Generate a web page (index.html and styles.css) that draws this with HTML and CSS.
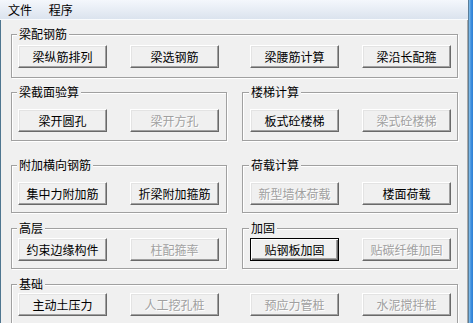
FILE: index.html
```html
<!DOCTYPE html>
<html lang="zh-CN">
<head>
    <meta charset="UTF-8">
    <meta name="viewport" content="width=device-width, initial-scale=1.0">
    <title>结构计算工具</title>
    <link rel="stylesheet" href="styles.css">
</head>
<body>

<div class="window">
    <div class="client">
        <div class="menubar">
            <span class="menu-item">文件</span>
            <span class="menu-item">程序</span>
        </div>

        <div class="content">
            <div class="group wide g1">
                <div class="group-title">梁配钢筋</div>
                <div class="buttons">
                    <button class="btn">梁纵筋排列</button>
                    <button class="btn">梁选钢筋</button>
                    <button class="btn">梁腰筋计算</button>
                    <button class="btn">梁沿长配箍</button>
                </div>
            </div>

            <div class="row r2">
                <div class="group half">
                    <div class="group-title">梁截面验算</div>
                    <div class="buttons">
                        <button class="btn">梁开圆孔</button>
                        <button class="btn" disabled>梁开方孔</button>
                    </div>
                </div>
                <div class="group half right">
                    <div class="group-title">楼梯计算</div>
                    <div class="buttons">
                        <button class="btn">板式砼楼梯</button>
                        <button class="btn" disabled>梁式砼楼梯</button>
                    </div>
                </div>
            </div>

            <div class="row r3">
                <div class="group half">
                    <div class="group-title">附加横向钢筋</div>
                    <div class="buttons">
                        <button class="btn">集中力附加筋</button>
                        <button class="btn">折梁附加箍筋</button>
                    </div>
                </div>
                <div class="group half right">
                    <div class="group-title">荷载计算</div>
                    <div class="buttons">
                        <button class="btn" disabled>新型墙体荷载</button>
                        <button class="btn">楼面荷载</button>
                    </div>
                </div>
            </div>

            <div class="row r4">
                <div class="group half">
                    <div class="group-title">高层</div>
                    <div class="buttons">
                        <button class="btn">约束边缘构件</button>
                        <button class="btn" disabled>柱配箍率</button>
                    </div>
                </div>
                <div class="group half right">
                    <div class="group-title">加固</div>
                    <div class="buttons">
                        <button class="btn default">贴钢板加固</button>
                        <button class="btn" disabled>贴碳纤维加固</button>
                    </div>
                </div>
            </div>

            <div class="group wide g5">
                <div class="group-title">基础</div>
                <div class="buttons">
                    <button class="btn">主动土压力</button>
                    <button class="btn" disabled>人工挖孔桩</button>
                    <button class="btn" disabled>预应力管桩</button>
                    <button class="btn" disabled>水泥搅拌桩</button>
                </div>
            </div>
        </div>
    </div>
    <div class="frame"></div>
</div>

</body>
</html>
```

FILE: styles.css
```css
body {
    margin: 0;
    font-family: "Noto Sans CJK SC", "Noto Sans", sans-serif;
    font-size: 12px;
    color: #000000;
    background-color: #f0f0f0;
    overflow: hidden;
}

.window {
    display: flex;
    width: 473px;
    height: 323px;
    overflow: hidden;
}

.client {
    width: 468px;
    display: flex;
    flex-direction: column;
}

/* Barra de menu */
.menubar {
    height: 19px;
    line-height: 19px;
    padding-left: 1px;
    background: linear-gradient(#f4f7fc, #dbe3ee);
    border-bottom: 1px solid #f9fbfd;
}

.menu-item {
    display: inline-block;
    padding: 0 7px;
}

.content {
    flex: 1;
    display: flex;
    flex-direction: column;
    border-left: 1px solid #4f7690;
    border-right: 1px solid #a9a9a9;
    padding: 0 9px 0 10px;
}

.row {
    display: flex;
    gap: 15px;
}

/* Caixas de grupo */
.group {
    border: 1px solid #a0a0a0;
    box-shadow: inset 1px 1px 0 #ffffff, 1px 1px 0 #ffffff;
}

.half {
    width: 216px;
    box-sizing: border-box;
}

.group-title {
    width: max-content;
    height: 14px;
    line-height: 14px;
    margin: -8px 0 0 5px;
    padding: 0 2px;
    background-color: #f0f0f0;
}

.right .group-title {
    margin-left: 6px;
}

.buttons {
    display: flex;
    gap: 23px;
    padding-left: 6px;
}

.right .buttons {
    padding-left: 7px;
}

.wide .btn:nth-child(3) {
    margin-left: 8px;
}

/* Espaçamento de cada linha */
.g1 {
    margin-top: 14px;
}

.g1 .buttons {
    margin-top: 4px;
    padding-bottom: 9px;
}

.r2 {
    margin-top: 14px;
}

.r2 .buttons {
    margin-top: 10px;
    padding-bottom: 8px;
}

.r3 {
    margin-top: 24px;
}

.r3 .buttons {
    margin-top: 10px;
    padding-bottom: 7px;
}

.r4 {
    margin-top: 15px;
}

.r4 .buttons {
    margin-top: 3px;
    padding-bottom: 7px;
}

.g5 {
    margin-top: 15px;
    height: 60px;
}

.g5 .buttons {
    margin-top: 2px;
}

/* Botões estilo Windows clássico */
.btn {
    width: 89px;
    height: 23px;
    padding: 0;
    font-family: inherit;
    font-size: 12px;
    color: #000000;
    background-color: #f0f0f0;
    border: 1px solid;
    border-color: #ffffff #696969 #696969 #ffffff;
    box-shadow: inset -1px -1px 0 #a0a0a0, inset 1px 1px 0 #e3e3e3;
    border-radius: 0;
    flex: none;
}

.btn.default {
    border-color: #000000;
    box-shadow: inset 1px 1px 0 #ffffff, inset -1px -1px 0 #696969, inset -2px -2px 0 #a0a0a0;
}

.btn:disabled {
    color: #a0a0a0;
    text-shadow: 1px 1px 0 #ffffff;
}

.frame {
    width: 5px;
    background: linear-gradient(90deg, #5a7d99 0, #5a7d99 1px, #8cc4ea 1px, #3e8fe0 3px, #2f7fd2 5px);
}
```
